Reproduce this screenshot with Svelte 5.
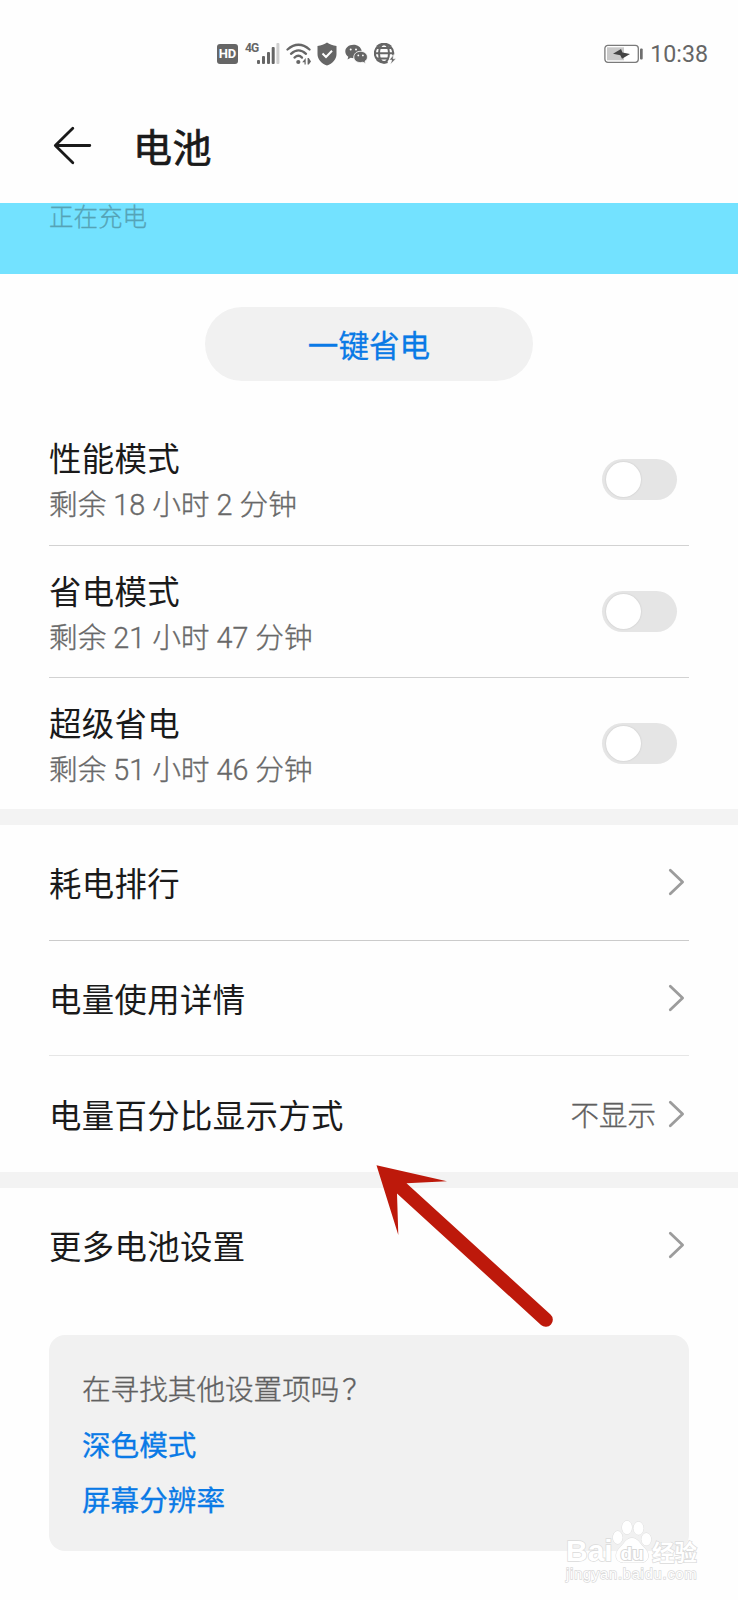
<script>
	let modes = $state([
		{ title: '性能模式', remaining: '剩余 18 小时 2 分钟', on: false },
		{ title: '省电模式', remaining: '剩余 21 小时 47 分钟', on: false },
		{ title: '超级省电', remaining: '剩余 51 小时 46 分钟', on: false }
	]);

	const details = [
		{ title: '耗电排行' },
		{ title: '电量使用详情' },
		{ title: '电量百分比显示方式', value: '不显示' }
	];

	const more = [{ title: '更多电池设置' }];

	const suggestions = ['深色模式', '屏幕分辨率'];
</script>

{#snippet linkRow(item)}
	<li class="link-row">
		<span class="title">{item.title}</span>
		{#if item.value}
			<span class="value">{item.value}</span>
		{/if}
		<svg class="chevron" width="17" height="28" viewBox="0 0 17 28" aria-hidden="true">
			<path d="M2.3 2.3 L14.6 14 L2.3 25.7" />
		</svg>
	</li>
{/snippet}

<div class="screen">
	<div class="status-bar">
		<div class="status-icons">
			<span class="hd">HD</span>
			<div class="signal">
				<span class="network">4G</span>
				<svg width="23" height="22" viewBox="0 0 23 22">
					<rect x="0" y="17" width="3" height="4" rx="1" />
					<rect x="5" y="13" width="3" height="8" rx="1" />
					<rect x="10" y="9" width="3" height="12" rx="1" />
					<rect x="14.7" y="4" width="3" height="17" rx="1" />
					<rect x="19.4" y="0" width="3" height="21" rx="1" fill="#cfcfcf" />
				</svg>
			</div>
			<svg class="wifi" width="26" height="22" viewBox="0 0 26 22">
				<g fill="none" stroke="#666" stroke-width="2.3" stroke-linecap="round">
					<path d="M1.5 6.5 Q12.5 -3 23.5 6.5" />
					<path d="M5 10.8 Q12.5 4 20 10.8" />
					<path d="M8.5 14.6 Q12.5 11 16 14.6" />
				</g>
				<circle cx="12.3" cy="19" r="2.1" />
				<path d="M19.7 15 V21.5 H18.5 V19.3 H16.2 Z M21.6 15 H22.8 L25 18.5 L22.8 21.5 H21.6 Z" />
			</svg>
			<svg class="shield" width="20" height="24" viewBox="0 0 20 24">
				<path d="M10 0.5 C12.5 2.5 16 3.5 19.5 4 V12 C19.5 17.5 15.5 21.5 10 23.5 C4.5 21.5 0.5 17.5 0.5 12 V4 C4 3.5 7.5 2.5 10 0.5 Z" />
				<path d="M5.5 11.5 L9 15 L15 8.7" fill="none" stroke="#fff" stroke-width="2" />
			</svg>
			<svg class="wechat" width="23" height="20" viewBox="0 0 23 20">
				<path d="M8.5 0.8 C3.8 0.8 0.3 3.7 0.3 7.5 C0.3 9.8 1.5 11.5 3.3 12.8 L2.5 15.5 L5.7 13.8 L8.5 14.2 C9 9.5 12 7 16.7 7 C16 3.3 12.7 0.8 8.5 0.8 Z" />
				<path d="M15.5 7.3 C11.7 7.3 8.8 9.8 8.8 13 C8.8 16.2 11.7 18.6 15.5 18.6 L18 18.2 L20.5 19.5 L20 17.3 C21.5 16.2 22.4 14.8 22.4 13 C22.4 9.8 19.3 7.3 15.5 7.3 Z" stroke="#fff" stroke-width="0.8" />
				<g fill="#fff">
					<circle cx="5.7" cy="5.5" r="1" />
					<circle cx="11" cy="5.5" r="1" />
					<circle cx="13.3" cy="11.4" r="0.9" />
					<circle cx="17.9" cy="11.4" r="0.9" />
				</g>
			</svg>
			<svg class="globe" width="22" height="22" viewBox="0 0 22 22">
				<g fill="none" stroke="#666" stroke-width="2">
					<path d="M19 12.5 A9.2 9.2 0 0 0 16.5 3.8 M3.5 3.8 A9.2 9.2 0 0 0 3.5 16.8" />
					<path d="M3.2 3.8 Q10 -1.8 16.8 3.8 M3.2 16.8 Q8 20.5 13.5 18.8" stroke-width="2.6" />
					<ellipse cx="10" cy="10.3" rx="5" ry="9.2" />
					<path d="M0.8 10.3 H19.2 M2.8 5 H17.2 M2.8 15.6 H14.5" />
				</g>
				<path d="M19.7 11.6 L15.2 17 H17.8 L16.5 21.3 L21.9 15.8 H19 Z" stroke="#fff" stroke-width="0.6" />
			</svg>
		</div>
		<div class="status-right">
			<svg width="39" height="20" viewBox="0 0 39 20">
				<rect x="0.9" y="1.3" width="33.4" height="17" rx="3" fill="#fff" stroke="#7a7a7a" stroke-width="1.3" />
				<rect x="3" y="3.3" width="17" height="13" fill="#c9c9c9" />
				<path d="M17 5 L9 9.8 L16.3 11.3 L18 14.8 L26 10 L18.5 8.5 Z" fill="#444" />
				<rect x="36" y="4.6" width="2.7" height="11" rx="1" fill="#6e6e6e" />
			</svg>
			<time>10:38</time>
		</div>
	</div>

	<header class="app-bar">
		<svg width="40" height="40" viewBox="0 0 40 40" aria-label="返回">
			<path d="M20.8 2.3 L3.3 19.5 L20.8 36.7 M3.5 19.5 H37.8" />
		</svg>
		<h1>电池</h1>
	</header>

	<div class="charging">正在充电</div>

	<button class="save-button">一键省电</button>

	<ul class="modes">
		{#each modes as mode}
			<li class="mode-row">
				<div class="mode-text">
					<span class="title">{mode.title}</span>
					<span class="remaining">{mode.remaining}</span>
				</div>
				<button
					class="switch"
					class:on={mode.on}
					role="switch"
					aria-checked={mode.on}
					aria-label={mode.title}
					onclick={() => (mode.on = !mode.on)}
				>
					<span class="knob"></span>
				</button>
			</li>
		{/each}
	</ul>

	<div class="gap"></div>

	<ul class="links">
		{#each details as item}
			{@render linkRow(item)}
		{/each}
	</ul>

	<div class="gap"></div>

	<ul class="links">
		{#each more as item}
			{@render linkRow(item)}
		{/each}
	</ul>

	<section class="suggest">
		<p>在寻找其他设置项吗<span class="mark">？</span></p>
		{#each suggestions as name}
			<a href="#settings">{name}</a>
		{/each}
	</section>

	<!-- Pointer to the percentage setting -->
	<svg class="pointer" width="180" height="166" viewBox="0 0 180 166" aria-hidden="true">
		<path d="M0.5 0.3 L71 16.3 L30.5 18.3 L174.5 149.5 A7 7 0 0 1 165 160 L21 28.5 L22.3 70 Z" />
	</svg>

	<div class="watermark">
		<div class="wm-logo">
			<span class="wm-latin">Bai</span>
			<svg class="paw" width="40" height="44" viewBox="0 0 40 44">
				<ellipse cx="5.7" cy="17.5" rx="4.8" ry="6.5" />
				<ellipse cx="15" cy="7.5" rx="5" ry="6.7" />
				<ellipse cx="26.5" cy="8.3" rx="5" ry="6.5" />
				<ellipse cx="34.3" cy="19.3" rx="4.8" ry="6.3" />
				<path d="M20 18 C14 18 12.5 23.5 7.5 28 C2 33.5 3 42.5 11.5 42.5 H29 C37.5 42.5 38 33.5 33 28.5 C28 24 26 18 20 18 Z" />
				<text x="20" y="39.5" text-anchor="middle">du</text>
			</svg>
			<span class="wm-han">经验</span>
		</div>
		<div class="wm-url">jingyan.baidu.com</div>
	</div>
</div>

<style>
	:global(body) {
		margin: 0;
		background: #fefefe;
	}

	.screen {
		position: relative;
		display: flex;
		flex-direction: column;
		box-sizing: border-box;
		width: 738px;
		height: 1600px;
		overflow: hidden;
		background: #fefefe;
		color: #1a1a1a;
		font-family: 'Noto Sans CJK SC', sans-serif;
	}

	ul {
		list-style: none;
		margin: 0;
		padding: 0;
	}

	button {
		border: none;
		padding: 0;
		font-family: inherit;
		cursor: pointer;
	}

	/* Status bar */
	.status-bar {
		display: flex;
		justify-content: space-between;
		align-items: center;
		height: 28px;
		padding: 40px 30px 0 217px;
		fill: #666;
	}

	.status-icons {
		display: flex;
		align-items: center;
	}

	.hd {
		width: 21px;
		height: 20px;
		border-radius: 3px;
		background: #666;
		color: #fff;
		font: bold 13px/20px Roboto, sans-serif;
		text-align: center;
	}

	.signal {
		display: flex;
		align-items: flex-start;
		margin-left: 7px;
	}

	.network {
		width: 12px;
		margin-top: -1px;
		color: #666;
		font: bold 12px/13px Roboto, sans-serif;
		letter-spacing: -0.8px;
	}

	.wifi {
		margin-left: 6px;
	}

	.shield {
		margin-left: 5px;
	}

	.wechat {
		margin-left: 8px;
	}

	.globe {
		margin-left: 6px;
	}

	.status-right {
		display: flex;
		align-items: center;
		gap: 7px;
	}

	time {
		color: #666;
		font: 23.2px/28px Roboto, sans-serif;
	}

	/* Title */
	.app-bar {
		display: flex;
		align-items: center;
		gap: 40px;
		height: 135px;
		box-sizing: border-box;
		padding: 20px 52px 0;
	}

	.app-bar path {
		fill: none;
		stroke: #1a1a1a;
		stroke-width: 2.8;
		stroke-linecap: round;
		stroke-linejoin: round;
	}

	h1 {
		margin: -2px 0 0 1px;
		font-size: 39px;
		font-weight: 400;
		line-height: 48px;
		letter-spacing: 0.5px;
		-webkit-text-stroke: 0.7px currentColor;
	}

	.charging {
		height: 71px;
		padding-left: 49px;
		background: #73e2ff;
		color: #55a3b6;
		font-size: 24.5px;
		font-weight: 300;
		line-height: 25px;
		-webkit-text-stroke: 0.3px currentColor;
	}

	.save-button {
		align-self: center;
		width: 328px;
		height: 74px;
		margin: 33px 0 32px;
		border-radius: 37px;
		background: #f1f1f1;
		color: #0a7ae6;
		font-size: 30.6px;
		-webkit-text-stroke: 0.3px currentColor;
	}

	/* Power modes */
	.mode-row {
		display: flex;
		align-items: center;
		justify-content: space-between;
		height: 132px;
		box-sizing: border-box;
		margin: 0 49px;
		padding-right: 12px;
		border-bottom: 1px solid #d2d2d2;
	}

	.mode-row:first-child {
		height: 133px;
	}

	.mode-row:last-child {
		height: 131px;
		border-bottom: none;
	}

	.mode-text {
		display: flex;
		flex-direction: column;
		padding-top: 4px;
	}

	.title {
		font-size: 32.4px;
		line-height: 46px;
		letter-spacing: 0.35px;
	}

	.remaining {
		margin-top: 2px;
		color: #686868;
		font-family: Roboto, 'Noto Sans CJK SC', sans-serif;
		font-size: 28.7px;
		font-weight: 300;
		line-height: 46px;
		-webkit-text-stroke: 0.35px currentColor;
	}

	.switch {
		width: 75px;
		height: 41px;
		padding: 3px;
		border-radius: 21px;
		background: #e5e5e5;
	}

	.knob {
		display: block;
		width: 35px;
		height: 35px;
		margin-left: 1px;
		border-radius: 50%;
		background: #fff;
		box-shadow: 0 0 2px rgba(0, 0, 0, 0.15);
	}

	.switch.on {
		background: #0a7ae6;
	}

	.switch.on .knob {
		margin-left: auto;
	}

	.gap {
		height: 16px;
		background: #f3f3f3;
	}

	/* Link rows */
	.link-row {
		display: flex;
		align-items: center;
		height: 115.5px;
		box-sizing: border-box;
		margin: 0 49px;
		padding-right: 4px;
		border-bottom: 1px solid #cbcbcb;
	}

	.link-row:nth-child(2) {
		border-bottom-color: #e6e6e6;
	}

	.link-row:last-child {
		border-bottom: none;
	}

	.link-row .title {
		flex: 1;
	}

	.value {
		margin: -1px 12px 0 0;
		color: #606060;
		font-size: 28.5px;
		font-weight: 300;
		-webkit-text-stroke: 0.35px currentColor;
	}

	.chevron path {
		fill: none;
		stroke: #9c9c9c;
		stroke-width: 2.8;
		stroke-linecap: round;
		stroke-linejoin: round;
	}

	/* Suggested settings */
	.suggest {
		display: flex;
		flex-direction: column;
		height: 216px;
		box-sizing: border-box;
		margin: 32px 49px 0;
		padding: 25px 33px;
		border-radius: 16px;
		background: #f1f1f1;
		font-size: 28.6px;
		line-height: 55.5px;
	}

	.suggest p {
		margin: 0;
		color: #606060;
		font-weight: 300;
		-webkit-text-stroke: 0.35px currentColor;
	}

	.mark {
		margin-left: 3px;
	}

	.suggest a {
		color: #0a7ae6;
		text-decoration: none;
		-webkit-text-stroke: 0.3px currentColor;
	}

	.pointer {
		position: absolute;
		left: 376px;
		top: 1165px;
		fill: #bd190b;
	}

	/* Watermark */
	.watermark {
		position: absolute;
		left: 566px;
		top: 1520px;
		color: #fff;
		-webkit-text-stroke: 1.4px #dadada;
		paint-order: stroke fill;
	}

	.wm-logo {
		display: flex;
		align-items: flex-end;
		height: 44px;
	}

	.wm-latin {
		width: 46px;
		font: bold 30px/32px 'Liberation Sans', sans-serif;
		margin-bottom: -3px;
	}

	.paw {
		fill: #fff;
		stroke: #dedede;
		stroke-width: 1;
	}

	.paw text {
		font: bold 19px 'Liberation Sans', sans-serif;
		-webkit-text-stroke: 0;
		stroke: #d8d8d8;
		stroke-width: 2;
		fill: #fff;
	}

	.wm-han {
		font-size: 22.5px;
		font-weight: bold;
		line-height: 26px;
	}

	.wm-url {
		font: 14.5px/20px 'Liberation Sans', sans-serif;
		letter-spacing: 0.85px;
	}
</style>
